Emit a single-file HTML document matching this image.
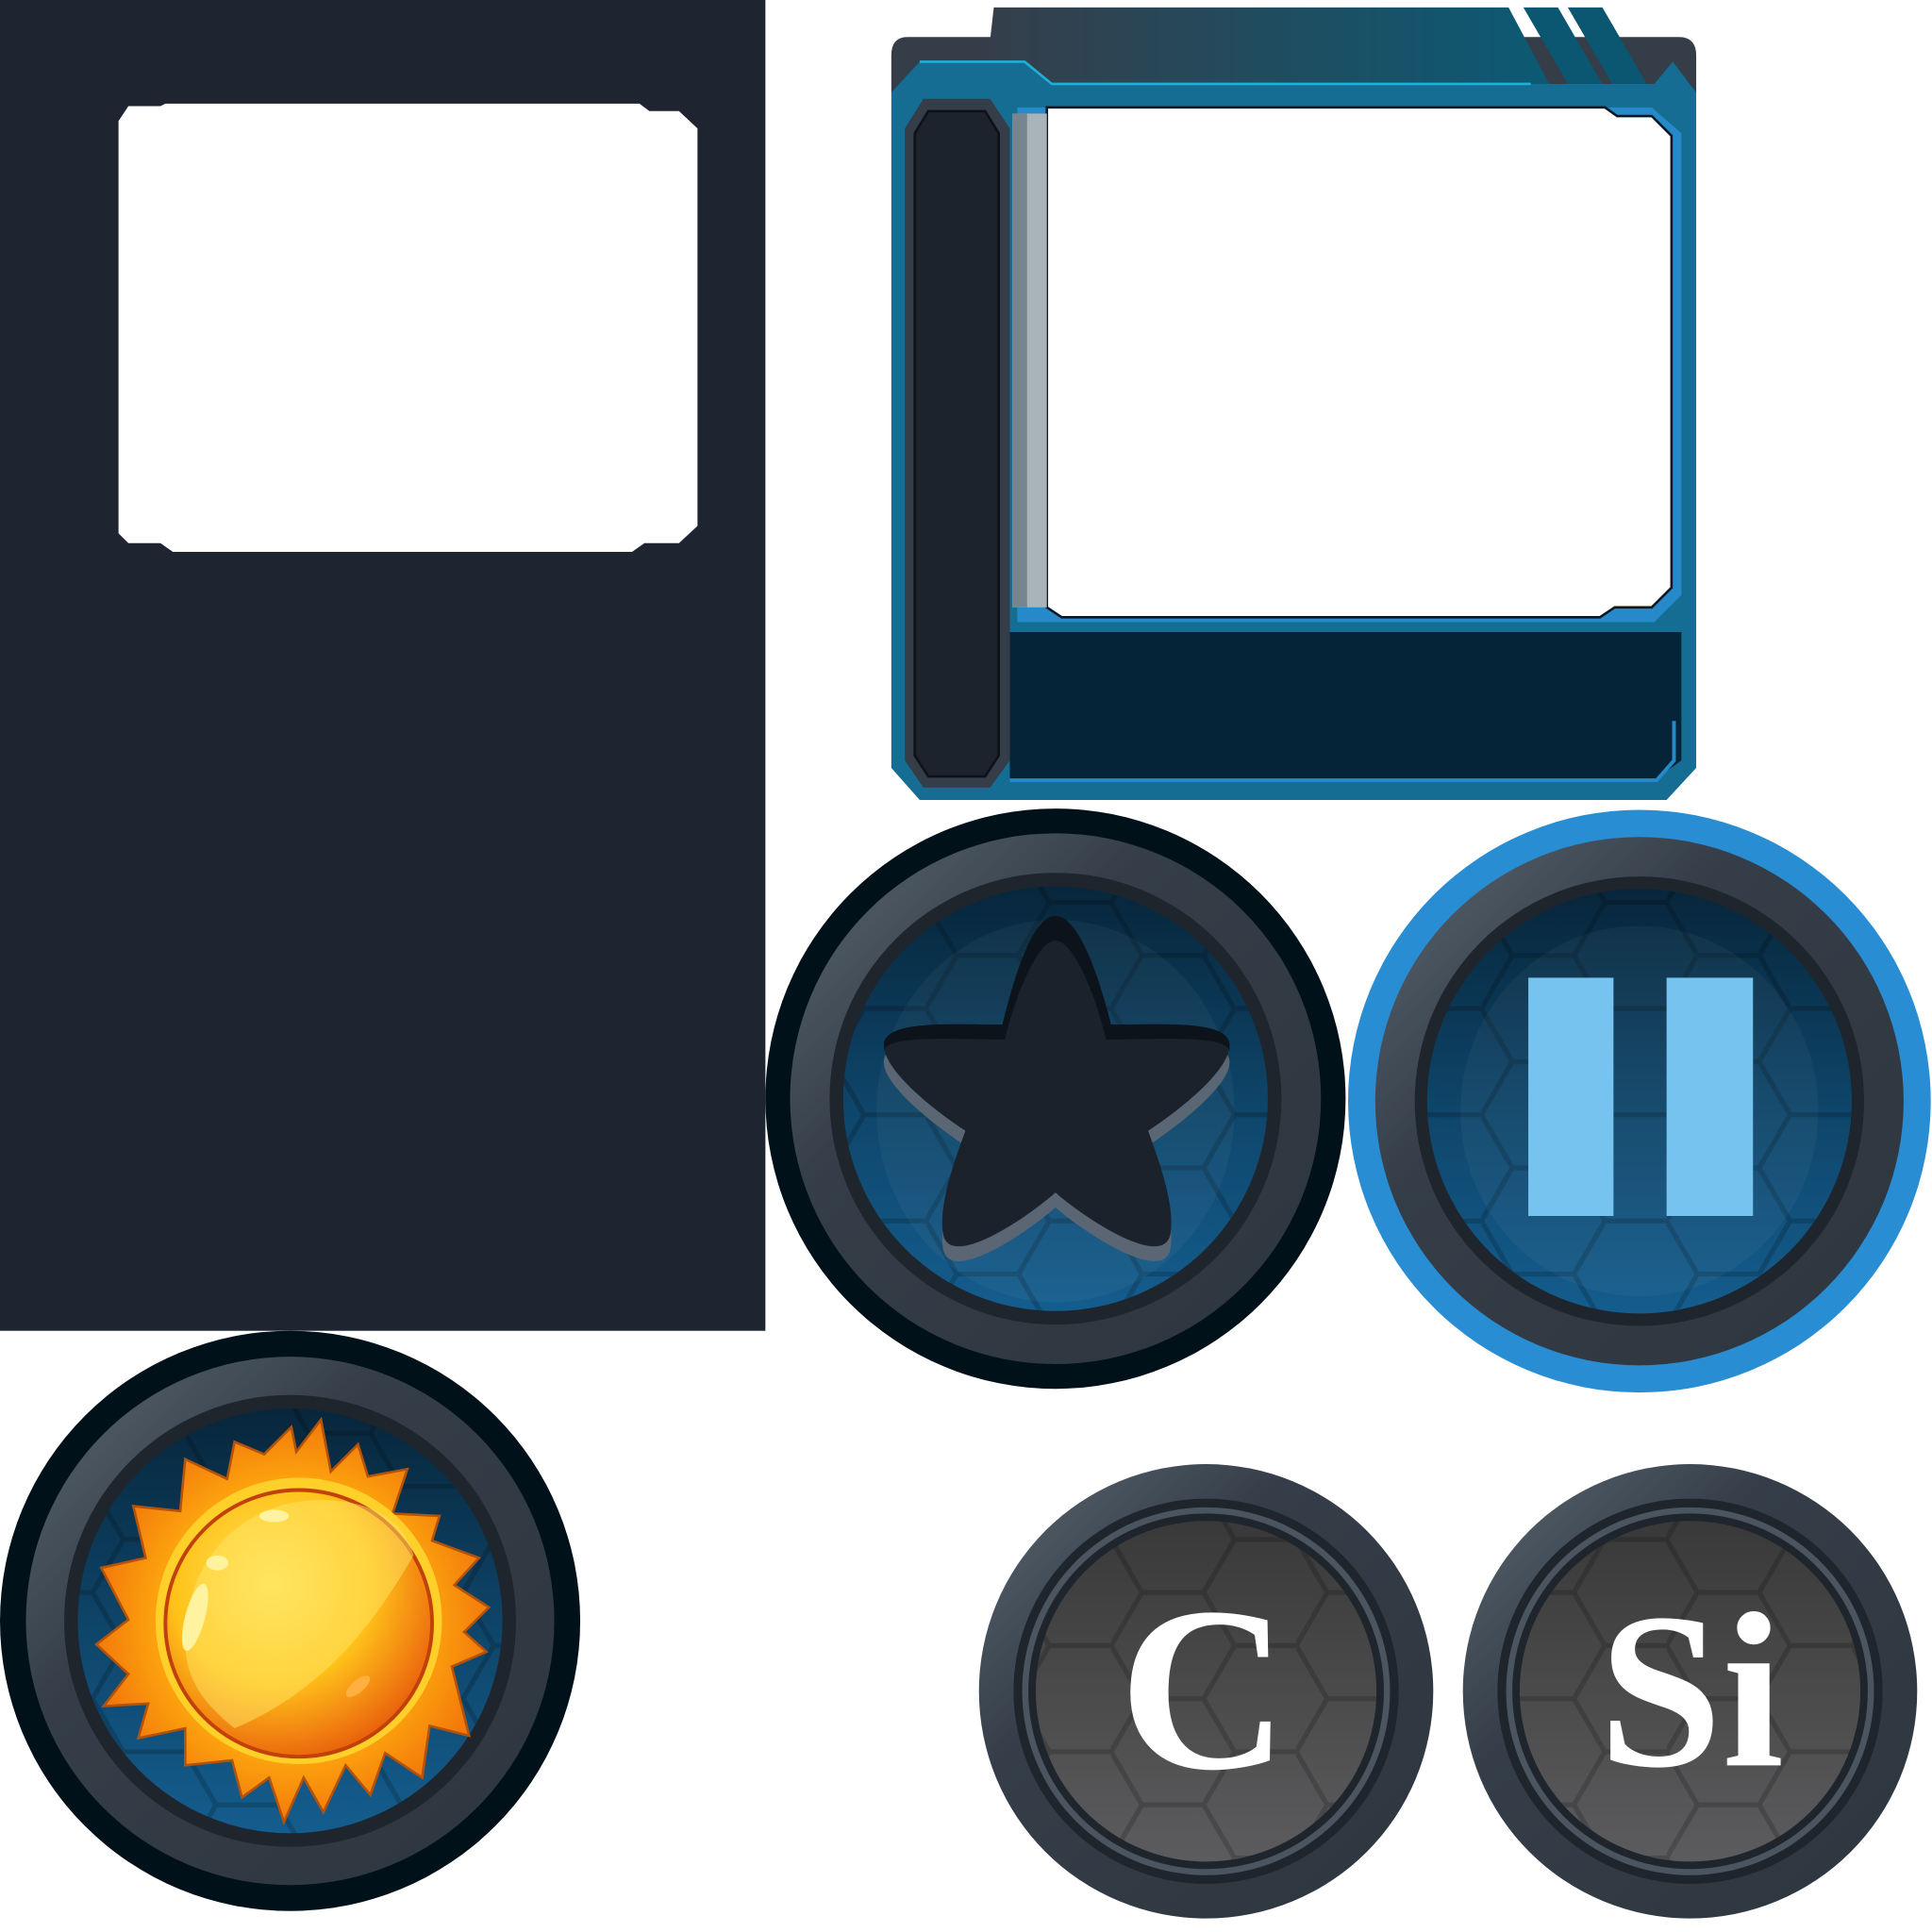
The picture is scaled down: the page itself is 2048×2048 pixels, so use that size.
<!DOCTYPE html>
<html><head><meta charset="utf-8">
<style>
html,body{margin:0;padding:0;background:#fff;}
svg{display:block;width:2048px;height:2048px;}
</style></head>
<body>
<svg viewBox="0 0 1565 1565" xmlns="http://www.w3.org/2000/svg">
<defs>
  <linearGradient id="blueIn" x1="0" y1="0" x2="0" y2="1">
    <stop offset="0" stop-color="#07263b"/>
    <stop offset="0.5" stop-color="#0e4468"/>
    <stop offset="1" stop-color="#145d8e"/>
  </linearGradient>
  <linearGradient id="grayIn" x1="0" y1="0" x2="0" y2="1">
    <stop offset="0" stop-color="#393939"/>
    <stop offset="1" stop-color="#5c5c5e"/>
  </linearGradient>
  <linearGradient id="hdr" x1="0" y1="0" x2="1" y2="0">
    <stop offset="0" stop-color="#363e4a"/>
    <stop offset="1" stop-color="#0b5a74"/>
  </linearGradient>
  <linearGradient id="ring" x1="0" y1="0" x2="1" y2="1">
    <stop offset="0" stop-color="#5a6671"/>
    <stop offset="0.35" stop-color="#353e48"/>
    <stop offset="1" stop-color="#2d353e"/>
  </linearGradient>
  <radialGradient id="sunCore" cx="0.4" cy="0.35" r="0.75">
    <stop offset="0" stop-color="#ffe45a"/>
    <stop offset="0.5" stop-color="#ffc21a"/>
    <stop offset="0.8" stop-color="#f07a10"/>
    <stop offset="1" stop-color="#e24a08"/>
  </radialGradient>
  <radialGradient id="sunRay" cx="0.5" cy="0.5" r="0.5">
    <stop offset="0.6" stop-color="#ffb010"/>
    <stop offset="1" stop-color="#f37a0a"/>
  </radialGradient>
  <pattern id="hex" width="150" height="86" patternUnits="userSpaceOnUse" x="0" y="0">
    <path d="M0 43 L25 0 L75 0 L100 43 L75 86 L25 86 Z M100 43 L150 43" fill="none" stroke="#000" stroke-opacity="0.18" stroke-width="4"/>
  </pattern>
</defs>

<!-- Left dark panel -->
<rect x="0" y="0" width="620" height="1078" fill="#1e2430"/>
<path d="M104 86 L130 86 L134 84 L518 84 L526 90 L550 90 L565 104 L565 426 L550 440 L522 440 L512 447 L140 447 L130 440 L104 440 L96 432 L96 98 Z" fill="#fff"/>

<!-- Card frame -->
<path d="M735 30 L1360 30 Q1374 30 1374 45 L1374 75 L722 75 L722 45 Q722 30 735 30 Z" fill="#353d48"/>
<path d="M805 6 L1222 6 L1255 68 L798 68 Z" fill="url(#hdr)"/>
<path d="M1234 6 L1262 6 L1298 68 L1270 68 Z" fill="#0b5670"/>
<path d="M1270 6 L1298 6 L1334 68 L1306 68 Z" fill="#0b5670"/>
<path d="M722 75 L745 50 L830 50 L852 68 L1340 68 L1355 50 L1374 75 L1374 622 L1350 648 L745 648 L722 622 Z" fill="#156d93"/>
<path d="M745 50 L830 50 L852 68 L1240 68" fill="none" stroke="#1fb0d8" stroke-width="2"/>
<!-- dark left column -->
<path d="M748 80 L802 80 L818 104 L818 616 L802 638 L748 638 L733 616 L733 104 Z" fill="#353e48"/>
<path d="M752 90 L798 90 L809 108 L809 612 L798 629 L752 629 L741 612 L741 108 Z" fill="#1d232c" stroke="#0d1217" stroke-width="2"/>
<!-- picture area -->
<path d="M824 87 L1338 87 L1362 108 L1362 482 L1340 504 L824 504 Z" fill="#2689c9"/>
<path d="M848 87 L1300 87 L1310 94 L1338 94 L1354 110 L1354 476 L1338 492 L1308 492 L1296 500 L860 500 L848 492 Z" fill="#fff" stroke="#0a1a24" stroke-width="2"/>
<rect x="820" y="92" width="28" height="400" fill="#a9b3b8"/>
<rect x="820" y="92" width="12" height="400" fill="#76858f"/>
<!-- bottom navy box -->
<path d="M818 512 L1362 512 L1362 616 L1340 632 L818 632 Z" fill="#062438"/>
<path d="M818 632 L1342 632 L1356 616 L1356 584" fill="none" stroke="#2689c9" stroke-width="3"/>

<!-- Star button -->
<g>
  <circle cx="855" cy="890" r="235" fill="#00111a"/>
  <circle cx="855" cy="890" r="215" fill="url(#ring)"/>
  <circle cx="855" cy="890" r="183" fill="#1e252d"/>
  <circle cx="855" cy="890" r="172" fill="url(#blueIn)"/>
  <circle cx="855" cy="890" r="172" fill="url(#hex)"/>
  <ellipse cx="855" cy="900" rx="145" ry="155" fill="#fff" fill-opacity="0.04"/>
  <!-- star shadow (lighter) -->
  <path d="M855 758 C875 758 892 810 900 842 C940 842 995 838 996 860 C997 880 950 915 930 928 C940 955 952 990 948 1012 C942 1040 880 1000 855 978 C830 1000 770 1040 764 1012 C760 990 772 955 782 928 C762 915 715 880 716 860 C717 838 772 842 812 842 C820 810 835 758 855 758 Z" fill="#5a6673"/>
  <!-- star -->
  <path d="M855 742 C875 742 892 798 900 830 C940 830 995 826 996 846 C997 868 950 903 930 916 C940 943 952 978 948 1000 C942 1028 880 988 855 966 C830 988 770 1028 764 1000 C760 978 772 943 782 916 C762 903 715 868 716 846 C717 826 772 830 812 830 C820 798 835 742 855 742 Z" fill="#1c222b"/>
  <path d="M855 742 C875 742 892 798 900 830 C940 830 995 826 996 846 L996 852 C995 838 940 842 896 842 C888 808 870 762 855 762 C840 762 822 808 814 842 C770 842 717 838 716 852 L716 846 C717 826 772 830 812 830 C820 798 835 742 855 742 Z" fill="#0c131a"/>
</g>

<!-- Pause button -->
<g>
  <circle cx="1328" cy="892" r="236" fill="#288dd2"/>
  <circle cx="1328" cy="892" r="214" fill="url(#ring)"/>
  <circle cx="1328" cy="892" r="182" fill="#1e252d"/>
  <circle cx="1328" cy="892" r="172" fill="url(#blueIn)"/>
  <circle cx="1328" cy="892" r="172" fill="url(#hex)"/>
  <ellipse cx="1328" cy="900" rx="145" ry="150" fill="#fff" fill-opacity="0.04"/>
  <rect x="1238" y="792" width="69" height="193" fill="#75c3ee"/>
  <rect x="1350" y="792" width="70" height="193" fill="#75c3ee"/>
</g>

<!-- Sun button -->
<g>
  <circle cx="235" cy="1313" r="235" fill="#00111a"/>
  <circle cx="235" cy="1313" r="214" fill="url(#ring)"/>
  <circle cx="235" cy="1313" r="183" fill="#1e252d"/>
  <circle cx="235" cy="1313" r="172" fill="url(#blueIn)"/>
  <circle cx="235" cy="1313" r="172" fill="url(#hex)"/>
  <path d="M260 1150 L268 1192 L290 1170 L298 1196 L330 1190 L318 1226 L356 1228 L350 1248 L388 1262 L368 1284 L396 1302 L376 1322 L394 1338 L366 1350 L380 1406 L348 1398 L342 1440 L312 1420 L300 1454 L280 1430 L262 1468 L246 1440 L230 1476 L218 1440 L196 1456 L188 1426 L150 1430 L150 1400 L112 1408 L120 1380 L84 1382 L104 1356 L78 1332 L104 1312 L82 1270 L118 1262 L108 1220 L146 1224 L150 1182 L184 1198 L190 1168 L214 1178 L236 1156 L240 1176 Z" fill="url(#sunRay)" stroke="#b3520a" stroke-width="2"/>
  <circle cx="242" cy="1313" r="116" fill="#ffd02a"/>
  <circle cx="242" cy="1315" r="108" fill="url(#sunCore)" stroke="#c2400a" stroke-width="3"/>
  <path d="M150 1330 C150 1260 200 1215 260 1215 C310 1215 330 1240 335 1260 C300 1320 260 1370 190 1400 C165 1380 150 1360 150 1330 Z" fill="#ffe566" fill-opacity="0.5"/>
  <ellipse cx="158" cy="1310" rx="8" ry="28" fill="#fff3a0" transform="rotate(15 158 1310)"/>
  <ellipse cx="176" cy="1266" rx="9" ry="6" fill="#fff3a0"/>
  <ellipse cx="222" cy="1228" rx="12" ry="5" fill="#fff3a0"/>
  <ellipse cx="290" cy="1366" rx="12" ry="5" fill="#ffb040" transform="rotate(-40 290 1366)"/>
</g>

<!-- C button -->
<g>
  <circle cx="977" cy="1370" r="184" fill="url(#ring)"/>
  <circle cx="977" cy="1370" r="156" fill="#1e252d"/>
  <circle cx="977" cy="1370" r="149" fill="#4a5560"/>
  <circle cx="977" cy="1370" r="144" fill="#1e252d"/>
  <circle cx="977" cy="1370" r="138" fill="url(#grayIn)"/>
  <circle cx="977" cy="1370" r="138" fill="url(#hex)"/>
  <text x="975" y="1432" text-anchor="middle" font-family="Liberation Serif, serif" font-weight="bold" font-size="190" fill="#fff">C</text>
</g>

<!-- Si button -->
<g>
  <circle cx="1369" cy="1370" r="184" fill="url(#ring)"/>
  <circle cx="1369" cy="1370" r="156" fill="#1e252d"/>
  <circle cx="1369" cy="1370" r="149" fill="#4a5560"/>
  <circle cx="1369" cy="1370" r="144" fill="#1e252d"/>
  <circle cx="1369" cy="1370" r="138" fill="url(#grayIn)"/>
  <circle cx="1369" cy="1370" r="138" fill="url(#hex)"/>
  <text x="1370" y="1430" text-anchor="middle" font-family="Liberation Serif, serif" font-weight="bold" font-size="180" fill="#fff">Si</text>
</g>
</svg>
</body></html>
